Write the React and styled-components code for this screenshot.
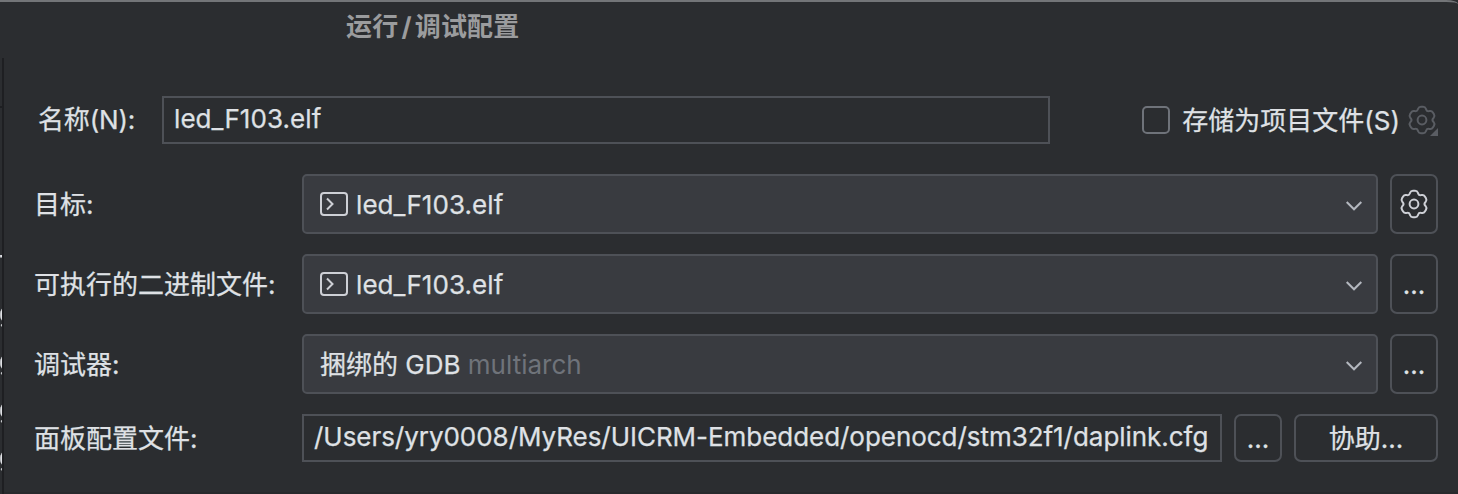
import React from "react";
import styled, { createGlobalStyle } from "styled-components";

const GlobalStyle = createGlobalStyle`
  * { box-sizing: border-box; }
  body {
    margin: 0;
    background: #2b2d30;
    color: #dfe1e5;
    font: 400 26px/32px Inter, "Noto Sans CJK SC", sans-serif;
    -webkit-text-stroke: 0.25px currentColor;
    overflow: hidden;
  }
`;

const Dialog = styled.div`
  display: flex;
  flex-direction: column;
  width: 1458px;
  height: 494px;
  border-top: 2px solid #737578;
  border-top-right-radius: 12px 4px;
  background: #2b2d30;
`;

const TitleBar = styled.header`
  height: 56px;
  padding: 9px 0 0 346px;
  color: #9b9c9e;
  font-size: 26px;
  font-weight: 700;
  letter-spacing: 0.2px;
  white-space: nowrap;
  -webkit-text-stroke: 0;
`;

const Slash = styled.span`
  margin: 0 3px 0 3px;
`;

const Body = styled.div`
  display: flex;
  flex: 1;
  min-height: 0;
`;

const TreeEdge = styled.aside`
  width: 4px;
  flex: none;
  overflow: hidden;
  border-right: 2px solid #1e1f22;
  will-change: transform;
`;

const TreeToolbar = styled.div`
  height: 50px;
  border-bottom: 2px solid #1e1f22;
`;

const TreeItem = styled.div`
  height: 48px;
  line-height: 48px;
  margin-left: -1px;
`;

const TreeItems = styled.div`
  padding-top: 133px;
`;

const Form = styled.main`
  display: flex;
  flex-direction: column;
  gap: 20px;
  flex: 1;
  padding: 38px 20px 0 30px;
  border-bottom: 2px solid #28292c;
`;

const Row = styled.div`
  display: flex;
  align-items: center;
  height: ${(p) => p.$height || 60}px;
  margin-bottom: ${(p) => p.$after || 0}px;
  gap: 12px;
`;

const Label = styled.label`
  flex: none;
  width: ${(p) => p.$width || 256}px;
  padding-left: ${(p) => p.$indent || 0}px;
  padding-top: ${(p) => (p.$indent ? 0 : 2)}px;
  letter-spacing: ${(p) => (p.$indent ? "-0.15px" : "0")};
  white-space: nowrap;
`;

const TextField = styled.div`
  width: ${(p) => p.$width}px;
  height: 48px;
  padding: 5px 10px;
  border: 2px solid #4e5157;
  white-space: nowrap;
  letter-spacing: ${(p) => p.$spacing || "0.08px"};
`;

const Combo = styled.div`
  display: flex;
  align-items: center;
  width: 1076px;
  height: 60px;
  padding: 0 14px 0 16px;
  border: 2px solid #4e5157;
  border-radius: 5px;
  background: #393b40;
`;

const ComboText = styled.span`
  flex: 1;
  padding-top: 2px;
  padding-left: ${(p) => (p.$icon ? 8 : 0)}px;
  letter-spacing: ${(p) => (p.$icon ? "0.08px" : "0")};
`;

const Muted = styled.span`
  color: #6f737a;
  -webkit-text-stroke: 0;
`;

const Button = styled.div`
  display: flex;
  align-items: center;
  justify-content: center;
  width: ${(p) => p.$width || 48}px;
  height: ${(p) => p.$height || 60}px;
  padding-top: ${(p) => (p.$text ? 2 : 0)}px;
  border: 2px solid #4e5157;
  border-radius: 7px;
  white-space: nowrap;
`;

const StoreOption = styled.div`
  display: flex;
  align-items: center;
  margin-left: auto;
`;

const StoreText = styled.span`
  padding-top: 2px;
`;

const CheckBox = styled.span`
  width: 28px;
  height: 28px;
  margin-right: 12px;
  border: 2px solid #6f737a;
  border-radius: 5px;
`;

const GearSlot = styled.span`
  display: flex;
  margin-left: 6px;
`;

const rotate = ([x, y], deg) => {
  const a = (deg * Math.PI) / 180;
  return [x * Math.cos(a) - y * Math.sin(a), x * Math.sin(a) + y * Math.cos(a)];
};

const toward = (from, to, dist) => {
  const len = Math.hypot(to[0] - from[0], to[1] - from[1]);
  return from.map((v, i) => v + ((to[i] - v) * dist) / len);
};

const gearPoints = Array.from({ length: 6 }, (_, k) =>
  [[-3.2, -13.2], [3.2, -13.2], [4.9, -8.5]].map((p) => rotate(p, k * 60))
).flat();

const gearPath =
  gearPoints
    .map((p, i) => {
      const n = gearPoints.length;
      const a = toward(p, gearPoints[(i + n - 1) % n], 2.1);
      const b = toward(p, gearPoints[(i + 1) % n], 2.1);
      const f = (q) => q.map((v) => v.toFixed(2)).join(" ");
      return `${i ? "L" : "M"}${f(a)}Q${f(p)} ${f(b)}`;
    })
    .join("") + "Z";

function Gear({ color, menu }) {
  return (
    <svg width="32" height="32" viewBox="-16 -16 32 32" fill="none" stroke={color} strokeWidth="2">
      <path d={gearPath} />
      <circle r="4.4" />
      {menu && <path d="M16 8V16H8Z" fill={color} stroke="none" />}
    </svg>
  );
}

function Terminal() {
  return (
    <svg width="28" height="24" viewBox="0 0 28 24" fill="none" stroke="#ced0d6" strokeWidth="2">
      <rect x="1" y="1" width="26" height="22" rx="3" />
      <path d="M7 6.5L12.5 12L7 17.5" />
    </svg>
  );
}

const ChevronIcon = styled.svg`
  margin-top: 4px;
`;

function Chevron() {
  return (
    <ChevronIcon width="16" height="10" viewBox="0 0 16 10" fill="none" stroke="#b4b8bf" strokeWidth="2">
      <path d="M0.7 1L8 8.3L15.3 1" />
    </ChevronIcon>
  );
}

export default function App() {
  return (
    <>
      <GlobalStyle />
      <Dialog>
        <TitleBar>运行<Slash>/</Slash>调试配置</TitleBar>
        <Body>
          <TreeEdge>
            <TreeToolbar />
            <TreeItems>
              {["T", "g", "g", "g", "g"].map((t, i) => (
                <TreeItem key={i}>{t}</TreeItem>
              ))}
            </TreeItems>
          </TreeEdge>
          <Form>
            <Row $height={48} $after={10}>
              <Label $width={116} $indent={4}>名称(N):</Label>
              <TextField $width={888}>led_F103.elf</TextField>
              <StoreOption>
                <CheckBox />
                <StoreText>存储为项目文件(S)</StoreText>
                <GearSlot><Gear color="#5a5d63" menu /></GearSlot>
              </StoreOption>
            </Row>
            <Row>
              <Label>目标:</Label>
              <Combo><Terminal /><ComboText $icon>led_F103.elf</ComboText><Chevron /></Combo>
              <Button><Gear color="#ced0d6" /></Button>
            </Row>
            <Row>
              <Label>可执行的二进制文件:</Label>
              <Combo><Terminal /><ComboText $icon>led_F103.elf</ComboText><Chevron /></Combo>
              <Button $text>...</Button>
            </Row>
            <Row>
              <Label>调试器:</Label>
              <Combo><ComboText>捆绑的 GDB <Muted>multiarch</Muted></ComboText><Chevron /></Combo>
              <Button $text>...</Button>
            </Row>
            <Row $height={48}>
              <Label>面板配置文件:</Label>
              <TextField $width={920} $spacing="-0.04px">/Users/yry0008/MyRes/UICRM-Embedded/openocd/stm32f1/daplink.cfg</TextField>
              <Button $text $height={48}>...</Button>
              <Button $text $height={48} $width={144}>协助...</Button>
            </Row>
          </Form>
        </Body>
      </Dialog>
    </>
  );
}
